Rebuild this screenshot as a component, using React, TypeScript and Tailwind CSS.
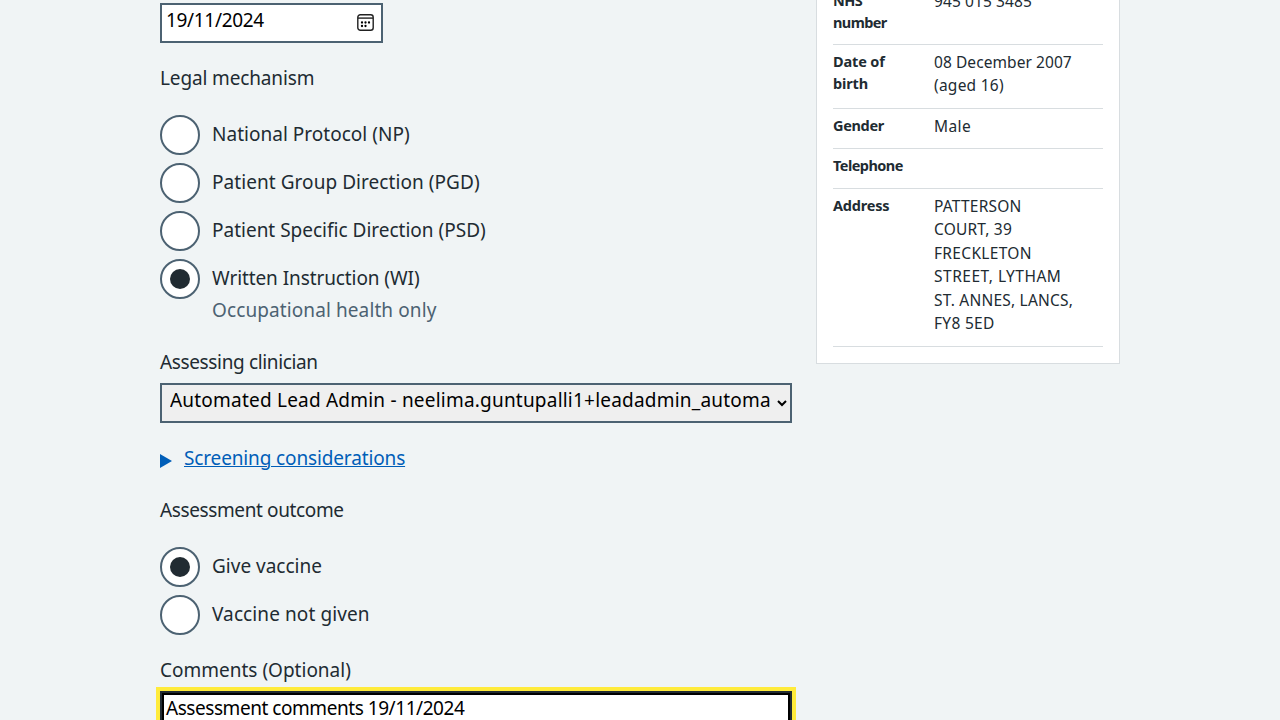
import type { ReactNode } from "react";

function Radio({ label, track, checked = false }: { label: string; track: string; checked?: boolean }) {
  return (
    <label className="flex h-10 gap-3">
      <span className="flex size-10 shrink-0 items-center justify-center rounded-full border-2 border-[#4c6272] bg-white">
        {checked && <span className="size-5 rounded-full bg-[#212b32]" />}
      </span>
      <span className={`whitespace-nowrap pt-[5px] leading-7 ${track}`}>{label}</span>
    </label>
  );
}

function Row({ label, height, labelClass = "", children }: { label: ReactNode; height: string; labelClass?: string; children?: ReactNode }) {
  return (
    <div className={`flex border-b border-[#d8dde0] pt-[5px] ${height}`}>
      <dt className={`w-[101px] shrink-0 whitespace-nowrap text-[14.5px] leading-[22px] font-bold ${labelClass}`}>{label}</dt>
      <dd className="whitespace-nowrap pt-px text-[15.5px] leading-[23.4px]">{children}</dd>
    </div>
  );
}

function CalendarIcon() {
  return (
    <svg className="size-[17px]" viewBox="0 0 17 17" fill="none" stroke="#212121" strokeWidth="1.4">
      <rect x="0.8" y="0.8" width="15.4" height="15.4" rx="2.5" />
      <path d="M1 4.1h15" />
      <g fill="#000" stroke="none">
        <circle cx="5" cy="8.5" r="1.15" />
        <circle cx="8.5" cy="8.5" r="1.15" />
        <circle cx="12" cy="8.5" r="1.15" />
        <circle cx="5" cy="12" r="1.15" />
        <circle cx="8.5" cy="12" r="1.15" />
      </g>
    </svg>
  );
}

export default function App() {
  return (
    <div className="flex h-[720px] w-[1280px] items-start gap-6 overflow-hidden bg-[#f0f4f5] pl-40 font-['Noto_Sans',sans-serif] text-[19px] text-[#212b32]">
      <main className="w-[632px] shrink-0 pt-[3px]">
        <div className="flex h-10 w-[223px] justify-between border-2 border-[#4c6272] bg-white pr-[7px] pl-1 text-black">
          <span className="pt-px leading-7 tracking-[-0.33px]">19/11/2024</span>
          <span className="pt-[9px]"><CalendarIcon /></span>
        </div>

        <h2 className="mt-[21px] leading-7 tracking-[-0.14px]">Legal mechanism</h2>
        <div className="mt-[23px] flex flex-col gap-2">
          <Radio label="National Protocol (NP)" track="tracking-[0.02px]" />
          <Radio label="Patient Group Direction (PGD)" track="tracking-[0.06px]" />
          <Radio label="Patient Specific Direction (PSD)" track="tracking-normal" />
          <Radio label="Written Instruction (WI)" track="tracking-[-0.09px]" checked />
        </div>
        <p className="-mt-[3px] pl-[52px] leading-7 tracking-[0.1px] text-[#4c6272]">Occupational health only</p>

        <h2 className="mt-6 leading-7 tracking-[-0.36px]">Assessing clinician</h2>
        <select className="mt-[7px] block h-10 w-[632px] border-2 border-[#4c6272] bg-[#efefef] pt-0 pr-0 pb-[6px] pl-1 leading-7 tracking-[0.21px] text-black">
          <option>Automated Lead Admin - neelima.guntupalli1+leadadmin_automa</option>
        </select>

        <div className="mt-[21px] flex h-7 items-center gap-3 text-[#005eb8]">
          <svg className="mt-[5px] h-[14px] w-3" viewBox="0 0 12 14" fill="currentColor">
            <path d="M0 0v14l12-7z" />
          </svg>
          <span className="leading-7 tracking-[-0.14px] underline decoration-1 underline-offset-1">Screening considerations</span>
        </div>

        <h2 className="mt-6 leading-7 tracking-[-0.38px]">Assessment outcome</h2>
        <div className="mt-[23px] flex flex-col gap-2">
          <Radio label="Give vaccine" track="tracking-normal" checked />
          <Radio label="Vaccine not given" track="tracking-[0.1px]" />
        </div>

        <h2 className="mt-[21px] leading-7 tracking-normal">Comments (Optional)</h2>
        <div className="mt-[7px] h-24 border-2 border-[#212b32] bg-white pl-1 leading-7 text-black shadow-[inset_0_0_0_2px_#000] outline-4 outline-[#ffeb3b]">
          <span className="block pt-px tracking-[-0.45px]">Assessment comments 19/11/2024</span>
        </div>
      </main>

      <aside className="-mt-[25px] w-[304px] shrink-0 border border-[#d8dde0] bg-white px-4 pt-2 pb-4">
        <dl>
          <Row label={<>NHS<br />number</>} height="h-[61px]" labelClass="tracking-[-0.6px]">
            <span className="tracking-[0.1px]">945 015 3485</span>
          </Row>
          <Row label={<>Date of<br />birth</>} height="h-16" labelClass="tracking-[-0.15px]">
            <span className="tracking-[0.07px]">08 December 2007</span><br />
            <span className="tracking-[0.25px]">(aged 16)</span>
          </Row>
          <Row label="Gender" height="h-10" labelClass="tracking-[-0.33px]">
            <span className="tracking-[0.4px]">Male</span>
          </Row>
          <Row label="Telephone" height="h-10" labelClass="tracking-[-0.55px]" />
          <Row label="Address" height="h-[158px]" labelClass="tracking-[-0.2px]">
            <span className="tracking-[0.22px]">PATTERSON</span><br />
            <span className="tracking-[0.2px]">COURT, 39</span><br />
            <span className="tracking-[0.32px]">FRECKLETON</span><br />
            <span className="tracking-[0.5px]">STREET, LYTHAM</span><br />
            <span className="tracking-[0.22px]">ST. ANNES, LANCS,</span><br />
            <span className="tracking-[0.3px]">FY8 5ED</span>
          </Row>
        </dl>
      </aside>
    </div>
  );
}
